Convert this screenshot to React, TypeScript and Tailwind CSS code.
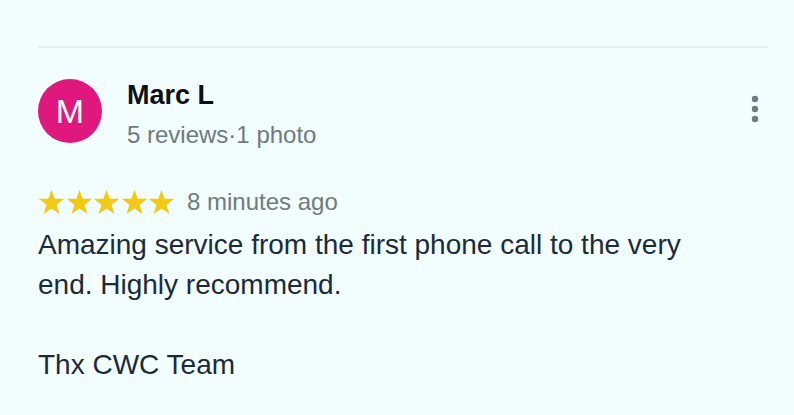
import React from "react";

const Star = () => (
  <svg width="27" height="26" viewBox="0 0 24 23" className="shrink-0">
    <polygon
      points="12,0.5 14.8,8.6 23.4,8.7 16.5,13.9 19.1,22.2 12,17.2 4.9,22.2 7.5,13.9 0.6,8.7 9.2,8.6"
      fill="#f4c914"
    />
  </svg>
);

export default function App() {
  return (
    <div
      className="w-[794px] h-[415px] bg-[#f2fdfd] pt-[46px] pl-[38px] pr-[26px] overflow-hidden"
      style={{ fontFamily: '"Liberation Sans", Arial, sans-serif' }}
    >
      <div className="h-[2px] bg-[#e4eeee]" />

      {/* header */}
      <div className="flex items-start justify-between mt-[31px]">
        <div className="flex items-start">
          <div className="w-[64px] h-[64px] rounded-full bg-[#e0177c] flex items-center justify-center text-white text-[34px] leading-none">
            M
          </div>
          <div className="ml-[25px]">
            <div className="text-[27px] leading-[32px] font-bold text-[#0d1114]">Marc L</div>
            <div className="mt-[8px] text-[24px] leading-[32px] text-[#6d7b80]">
              5 reviews·1 photo
            </div>
          </div>
        </div>
        <svg width="8" height="28" viewBox="0 0 8 28" className="mt-[16px] mr-[9px]">
          <circle cx="4" cy="4" r="3.2" fill="#6e7b80" />
          <circle cx="4" cy="14" r="3.2" fill="#6e7b80" />
          <circle cx="4" cy="24" r="3.2" fill="#6e7b80" />
        </svg>
      </div>

      {/* rating */}
      <div className="flex items-center h-[28px] mt-[37px]">
        <div className="flex gap-[0.5px]">
          <Star />
          <Star />
          <Star />
          <Star />
          <Star />
        </div>
        <span className="ml-[12px] text-[24px] leading-[28px] text-[#6d7b80]">8 minutes ago</span>
      </div>

      {/* body */}
      <div className="mt-[9px] text-[28px] leading-[40px] text-[#1c2a3a] w-[700px]">
        <p>Amazing service from the first phone call to the very</p>
        <p>end. Highly recommend.</p>
        <p>&nbsp;</p>
        <p>Thx CWC Team</p>
      </div>
    </div>
  );
}
